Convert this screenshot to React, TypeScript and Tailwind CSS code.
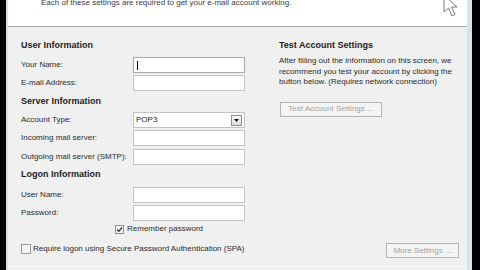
import React from "react";

function Field({ label, mt, focused }: { label: string; mt: string; focused?: boolean }) {
  return (
    <div className={`flex items-center h-[16px] ${mt}`}>
      <div className="w-[112px] text-[8px] leading-[10px] text-[#2b2b2b]">{label}</div>
      <div className={`w-[112px] h-[16px] bg-white border ${focused ? "border-[#a9a9a9]" : "border-[#c3c3c3]"} flex items-center pl-[3px]`}>
        {focused ? <div className="w-px h-[9px] bg-black" /> : null}
      </div>
    </div>
  );
}

function Title({ text, mt }: { text: string; mt: string }) {
  return <div className={`h-[12px] flex items-center text-[9px] leading-[12px] font-bold text-[#1c1c1c] ${mt}`}>{text}</div>;
}

export default function App() {
  return (
    <div className="w-[480px] h-[270px] bg-black pl-[6px] pr-[8px] flex font-['Liberation_Sans',Arial,sans-serif] overflow-hidden relative">
      <div className="flex-1 flex flex-col border-l-2 border-r-[5px] border-[#d8e3f0]">
        {/* header */}
        <div className="h-[27px] bg-white border-b border-[#a8a8a8] pl-[33px]">
          <div className="-mt-[2px] text-[8px] leading-[10px] text-[#3a3a3a]">
            Each of these settings are required to get your e-mail account working.
          </div>
        </div>
        {/* body */}
        <div className="flex-1 bg-[#f0f0f0] flex flex-col">
          <div className="flex pl-[13px]">
            {/* left column */}
            <div className="w-[224px] flex flex-col">
              <Title text="User Information" mt="mt-[12px]" />
              <Field label="Your Name:" mt="mt-[6px]" focused />
              <Field label="E-mail Address:" mt="mt-[2px]" />
              <Title text="Server Information" mt="mt-[4px]" />
              <div className="flex items-center h-[16px] mt-[5px]">
                <div className="w-[112px] text-[8px] leading-[10px] text-[#2b2b2b]">Account Type:</div>
                <div className="w-[112px] h-[16px] bg-white border border-[#c3c3c3] flex items-center justify-between pl-[2px] pr-[2px]">
                  <span className="text-[8px] leading-[10px] text-[#222]">POP3</span>
                  <div className="w-[11px] h-[11px] border border-[#8c8c8c] bg-gradient-to-b from-[#fafafa] to-[#dcdcdc] flex items-center justify-center">
                    <svg width="5" height="3" viewBox="0 0 5 3">
                      <path d="M0 0 L5 0 L2.5 3 Z" fill="#111" />
                    </svg>
                  </div>
                </div>
              </div>
              <Field label="Incoming mail server:" mt="mt-[2px]" />
              <Field label="Outgoing mail server (SMTP):" mt="mt-[3px]" />
              <Title text="Logon Information" mt="mt-[3px]" />
              <Field label="User Name:" mt="mt-[7px]" />
              <Field label="Password:" mt="mt-[2px]" />
              <div className="flex items-center h-[10px] mt-[3px] pl-[94px]">
                <div className="w-[9px] h-[9px] border border-[#8e8f8f] bg-[#f6f6f6] flex items-center justify-center">
                  <svg width="7" height="7" viewBox="0 0 7 7">
                    <path d="M1 3.5 L2.8 5.3 L6 1.5" stroke="#333" strokeWidth="1.3" fill="none" />
                  </svg>
                </div>
                <span className="ml-[3px] text-[8px] leading-[10px] text-[#2b2b2b]">Remember password</span>
              </div>
            </div>
            {/* right column */}
            <div className="ml-[34px] flex-1 flex flex-col">
              <Title text="Test Account Settings" mt="mt-[12px]" />
              <div className="mt-[5px] text-[8px] leading-[10.5px] text-[#2b2b2b]">
                <div>After filling out the information on this screen, we</div>
                <div>recommend you test your account by clicking the</div>
                <div>button below. (Requires network connection)</div>
              </div>
              <div className="mt-[14px] ml-[1px] w-[102px] h-[15px] border border-[#b5b5b5] bg-[#f4f4f4] flex items-center justify-center text-[8px] leading-[10px] text-[#a3a3a3]">
                Test Account Settings ...
              </div>
            </div>
          </div>
          {/* bottom row */}
          <div className="mt-[9px] flex items-center justify-between pl-[13px] pr-[8px]">
            <div className="flex items-center -mt-[3px]">
              <div className="w-[10px] h-[10px] border border-[#9a9a9a] bg-[#f4f4f4]" />
              <span className="ml-[2px] text-[8px] leading-[10px] text-[#2b2b2b]">
                Require logon using Secure Password Authentication (SPA)
              </span>
            </div>
            <div className="w-[73px] h-[15px] border border-[#b5b5b5] bg-[#f4f4f4] flex items-center justify-center text-[8px] leading-[10px] text-[#a3a3a3]">
              More Settings ...
            </div>
          </div>
          <div className="flex-1" />
          <div className="h-px bg-[#fbfbfb]" />
          <div className="h-[3px]" />
        </div>
      </div>
      {/* mouse cursor */}
      <svg className="absolute left-[443px] top-[-6px]" width="20" height="26" viewBox="0 0 20 26">
        <path d="M1 1 L1 18 L5.5 14 L9 22 L12 20.5 L8.5 13 L14 13 Z" fill="#ffffff" stroke="#7a7a7a" strokeWidth="1" strokeLinejoin="round" />
      </svg>
    </div>
  );
}
